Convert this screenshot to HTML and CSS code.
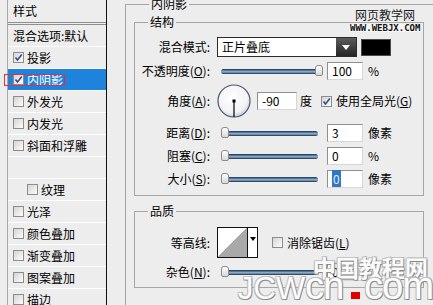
FILE: index.html
```html
<!DOCTYPE html>
<html lang="zh-CN">
<head>
    <meta charset="UTF-8">
    <meta name="viewport" content="width=device-width, initial-scale=1.0">
    <title>图层样式 - 内阴影</title>
    <link rel="stylesheet" href="styles.css">
</head>
<body>
<div class="dialog">
    <ul class="style-list">
        <li class="head">样式</li>
        <li class="blend">混合选项:默认</li>
        <li><span class="cb"><svg width="9" height="9" viewBox="0 0 9 9"><path d="M1.5 4.5 L3.5 7 L7.8 1.5" fill="none" stroke="#3b4a86" stroke-width="1.6"/></svg></span>投影</li>
        <li class="sel"><span class="cb"><svg width="9" height="9" viewBox="0 0 9 9"><path d="M1.5 4.5 L3.5 7 L7.8 1.5" fill="none" stroke="#3b4a86" stroke-width="1.6"/></svg></span>内阴影<span class="mark"></span></li>
        <li><span class="cb"></span>外发光</li>
        <li><span class="cb"></span>内发光</li>
        <li><span class="cb"></span>斜面和浮雕</li>
        <li></li>
        <li class="sub"><span class="cb"></span>纹理</li>
        <li><span class="cb"></span>光泽</li>
        <li><span class="cb"></span>颜色叠加</li>
        <li><span class="cb"></span>渐变叠加</li>
        <li><span class="cb"></span>图案叠加</li>
        <li><span class="cb"></span>描边</li>
    </ul>

    <div class="panel">
        <div class="group outer">
            <div class="legend">内阴影</div>

            <div class="group struct">
                <div class="legend">结构</div>
                <div class="row r-mode">
                    <label class="lbl">混合模式:</label>
                    <div class="select"><span class="value">正片叠底</span><span class="arrow"></span></div>
                    <span class="swatch"></span>
                </div>
                <div class="row r-opacity">
                    <label class="lbl">不透明度(<u>O</u>):</label>
                    <div class="slider"><span class="track"></span><span class="thumb end"></span></div>
                    <span class="field">100</span><span class="unit">%</span>
                </div>
                <div class="row r-angle">
                    <label class="lbl">角度(<u>A</u>):</label>
                    <svg class="dial" width="34" height="34" viewBox="0 0 34 34">
                        <defs>
                            <radialGradient id="dialFill" cx="45%" cy="40%" r="62%">
                                <stop offset="0" stop-color="#ffffff"/>
                                <stop offset="0.75" stop-color="#f3f3f5"/>
                                <stop offset="1" stop-color="#c3c8d4"/>
                            </radialGradient>
                        </defs>
                        <circle cx="17" cy="17" r="16" fill="url(#dialFill)" stroke="#4b5672" stroke-width="1.2"/>
                        <line x1="17" y1="17" x2="17" y2="33" stroke="#000" stroke-width="1.2"/>
                        <rect x="15.5" y="15.5" width="3" height="3" fill="#000"/>
                    </svg>
                    <span class="field wide">-90</span><span class="unit">度</span>
                    <span class="cb global"><svg width="9" height="9" viewBox="0 0 9 9"><path d="M1.5 4.5 L3.5 7 L7.8 1.5" fill="none" stroke="#3b4a86" stroke-width="1.6"/></svg></span>
                    <span class="check-lbl">使用全局光(<u>G</u>)</span>
                </div>
                <div class="row r-dist">
                    <label class="lbl">距离(<u>D</u>):</label>
                    <div class="slider"><span class="track"></span><span class="thumb"></span></div>
                    <span class="field">3</span><span class="unit">像素</span>
                </div>
                <div class="row r-choke">
                    <label class="lbl">阻塞(<u>C</u>):</label>
                    <div class="slider"><span class="track"></span><span class="thumb"></span></div>
                    <span class="field">0</span><span class="unit">%</span>
                </div>
                <div class="row r-size">
                    <label class="lbl">大小(<u>S</u>):</label>
                    <div class="slider"><span class="track"></span><span class="thumb"></span></div>
                    <span class="field"><span class="hl">0</span></span><span class="unit">像素</span>
                </div>
            </div>

            <div class="group quality">
                <div class="legend">品质</div>
                <div class="row r-contour">
                    <label class="lbl">等高线:</label>
                    <div class="contour"><span class="curve"></span><span class="drop"></span></div>
                    <span class="cb aa"></span>
                    <span class="check-lbl">消除锯齿(<u>L</u>)</span>
                </div>
                <div class="row r-noise">
                    <label class="lbl">杂色(<u>N</u>):</label>
                    <div class="slider"><span class="track"></span><span class="thumb"></span></div>
                    <span class="field">0</span>
                </div>
            </div>
        </div>
    </div>

    <div class="wm wm-site">网页教学网</div>
    <div class="wm wm-url">WWW.WEBJX.COM</div>
    <div class="wm wm-cn">中国教程网</div>
    <div class="wm wm-en"><span>JCW</span><span class="lc">cn</span><span class="dot">.</span><span class="lc">com</span></div>
</div>
</body>
</html>
```

FILE: styles.css
```css
* {
    box-sizing: border-box;
}

body {
    margin: 0;
    width: 433px;
    height: 305px;
    overflow: hidden;
    background: #ededed;
    font-family: "Noto Sans CJK SC", "Liberation Sans", sans-serif;
    font-size: 12px;
    line-height: 16px;
    color: #000;
}

.dialog {
    position: relative;
    display: flex;
    height: 305px;
}

/* left list of effects */
.style-list {
    list-style: none;
    margin: 0 0 0 7px;
    padding: 0;
    width: 100px;
    flex-shrink: 0;
    border-left: 1px solid #a8a8a8;
    border-right: 1px solid #111;
}
.style-list li {
    position: relative;
    display: flex;
    align-items: center;
    gap: 3px;
    height: 22px;
    padding-left: 5px;
    border-bottom: 1px solid #fff;
}
.style-list .head {
    height: 25px;
    border-bottom: 3px double #8e8e8e;
}
.style-list .sub {
    padding-left: 19px;
}
.style-list .sel {
    background: #1e83dd;
    color: #fff;
}
.mark {
    position: absolute;
    left: -4px;
    top: 5px;
    width: 61px;
    height: 12px;
    border: 1px solid #e0303c;
}

.cb {
    display: inline-flex;
    align-items: center;
    justify-content: center;
    flex-shrink: 0;
    width: 11px;
    height: 11px;
    border: 1px solid #8d8d8d;
    background: linear-gradient(135deg, #d4d4d4, #fdfdfd);
}
.cb svg {
    display: block;
}

/* right panel */
.panel {
    flex: 1;
    min-width: 0;
    padding: 4px 0 0 18px;
    overflow: hidden;
}
.group {
    border: 1px solid #a6a6a6;
}
.legend {
    display: table;
    margin: -9px 0 0 15px;
    padding: 0 2px;
    background: #ededed;
}
.outer {
    width: 330px;
    height: 340px;
    padding-left: 8px;
}
.struct {
    margin-top: 10px;
    width: 290px;
    padding-bottom: 7px;
}
.quality {
    margin-top: 15px;
    width: 290px;
    padding-bottom: 6px;
}
.struct .legend,
.quality .legend {
    margin-left: 13px;
}

.row {
    display: flex;
    align-items: center;
    height: 18px;
    margin-top: 5px;
}
.lbl {
    width: 75px;
    margin-right: 7px;
    text-align: right;
    flex-shrink: 0;
}
.r-mode {
    height: 20px;
    margin-top: 7px;
}
.r-angle {
    height: 34px;
    margin-top: 4px;
}
.r-dist {
    margin-top: 6px;
}
.r-contour {
    height: 31px;
    margin-top: 8px;
}
.r-noise {
    margin-top: 5px;
}

.select {
    display: flex;
    width: 140px;
    height: 20px;
    border: 1px solid #2b2b2b;
    background: #fff;
}
.select .value {
    flex: 1;
    padding-left: 4px;
    line-height: 18px;
}
.select .arrow {
    display: flex;
    align-items: center;
    justify-content: center;
    width: 20px;
    background: linear-gradient(#5c5c5c, #252525);
}
.select .arrow::after {
    content: "";
    border-left: 4px solid transparent;
    border-right: 4px solid transparent;
    border-top: 5px solid #fff;
}
.swatch {
    width: 30px;
    height: 17px;
    margin-left: 4px;
    background: #000;
    border: 1px solid #4a4a4a;
}

.slider {
    position: relative;
    display: flex;
    align-items: center;
    width: 106px;
    height: 12px;
    padding: 0 5px 0 4px;
}
.track {
    flex: 1;
    height: 5px;
    border-radius: 3px;
    background: linear-gradient(#1b3049, #6f98c0 45%, #9dbcd8 55%, #182b42);
}
.thumb {
    position: absolute;
    left: 4px;
    top: 0;
    width: 8px;
    height: 11px;
    border: 1px solid #8b8b8b;
    border-radius: 3px 3px 2px 2px;
    background: linear-gradient(#fff, #d8d8d8);
}
.thumb.end {
    left: 98px;
}

.field {
    width: 36px;
    height: 18px;
    margin-left: 4px;
    padding-left: 4px;
    line-height: 16px;
    background: #fff;
    border: 1px solid;
    border-color: #8f8f8f #d6d6d6 #d6d6d6 #8f8f8f;
}
.field.wide {
    width: 40px;
    margin-left: 6px;
}
.hl {
    background: #2f77c2;
    color: #dfeeff;
    padding: 0 1px;
}
.unit {
    margin-left: 5px;
}
.r-angle .unit {
    margin-left: 3px;
}
.global {
    margin-left: 9px;
}
.check-lbl {
    margin-left: 4px;
}

.contour {
    display: flex;
    width: 41px;
    height: 31px;
    border: 1px solid #111;
    background: #fff;
}
.contour .curve {
    width: 30px;
    border-right: 1px solid #111;
    background: linear-gradient(to bottom right, #fff 50%, #a9a9a9 50%);
}
.contour .drop {
    flex: 1;
    display: flex;
    justify-content: center;
    padding-top: 9px;
}
.contour .drop::after {
    content: "";
    height: 0;
    border-left: 3px solid transparent;
    border-right: 3px solid transparent;
    border-top: 4px solid #000;
}
.aa {
    margin-left: 14px;
}

/* watermarks */
.wm {
    position: absolute;
    pointer-events: none;
}
.wm-site {
    left: 355px;
    top: 8px;
    line-height: 14px;
    color: #1b1b1b;
}
.wm-url {
    left: 349px;
    top: 24px;
    padding: 0 1px;
    font: bold 9px/8px "DejaVu Sans Mono", monospace;
    background: #f6f6f6;
    color: #111;
}
.wm-cn {
    left: 313px;
    top: 255px;
    font-size: 23px;
    line-height: 24px;
    font-weight: 700;
    color: #fbfbfb;
    text-shadow: 1px 1px 0 #8a8a8a, -1px -1px 0 #c4c4c4, 1px -1px 0 #b0b0b0, -1px 1px 0 #a8a8a8;
}
.wm-en {
    left: 238px;
    top: 271px;
    display: flex;
    align-items: baseline;
    font-family: "Liberation Sans", sans-serif;
    font-size: 31px;
    line-height: 30px;
    color: #fdfdfd;
    text-shadow: 1px 1px 0 #8a8a8a, -1px -1px 0 #c4c4c4, 1px -1px 0 #b0b0b0, -1px 1px 0 #a8a8a8;
}
.wm-en .lc {
    font-size: 38px;
    letter-spacing: -1px;
}
.wm-en .dot {
    width: 9px;
    height: 7px;
    margin: 0 4px 0 8px;
    overflow: hidden;
    color: transparent;
    text-shadow: none;
    background: #e00000;
}
```
